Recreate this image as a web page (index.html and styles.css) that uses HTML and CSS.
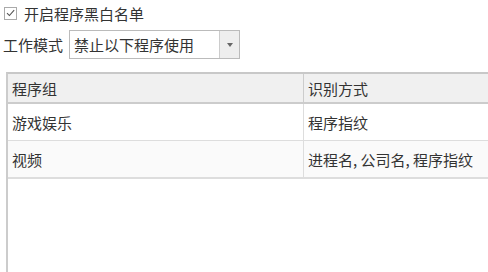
FILE: index.html
```html
<!DOCTYPE html>
<html>
<head>
<meta charset="utf-8" />
<title>黑白名单</title>
<link rel="stylesheet" href="styles.css">
</head>
<body>
<div class="panel">
	<label class="check">
		<span class="box">
			<svg width="12" height="12" viewBox="0 0 12 12"><path d="M2.2 6.2 L4.8 8.8 L10 2.8" fill="none" stroke="#555" stroke-width="1.2"/></svg>
		</span>
		开启程序黑白名单
	</label>

	<div class="mode">
		<span class="mode-label">工作模式</span>
		<div class="combo">
			<span class="combo-text">禁止以下程序使用</span>
			<span class="combo-btn"><span class="arrow"></span></span>
		</div>
	</div>

	<div class="grid">
		<div class="row head">
			<div class="cell c1">程序组</div>
			<div class="cell c2">识别方式</div>
		</div>
		<div class="row">
			<div class="cell c1">游戏娱乐</div>
			<div class="cell c2">程序指纹</div>
		</div>
		<div class="row alt">
			<div class="cell c1">视频</div>
			<div class="cell c2">进程名, 公司名, 程序指纹</div>
		</div>
	</div>
</div>
</body>
</html>
```

FILE: styles.css
```css
body {
	margin: 0;
	background: #fff;
	font-family: "Noto Sans CJK SC", "Noto Sans", sans-serif;
	font-size: 15px;
	color: #333;
}
.panel {
	height: 272px;
	overflow: hidden;
}
.check {
	display: flex;
	align-items: center;
	height: 16px;
	margin: 5px 0 0 4px;
	gap: 7px;
}
.box {
	width: 11px;
	height: 11px;
	border: 1px solid #aaa;
	display: flex;
	align-items: center;
	justify-content: center;
}
.mode {
	display: flex;
	align-items: center;
	margin: 9px 0 0 3px;
	gap: 6px;
}
.combo {
	display: flex;
	width: 169px;
	height: 27px;
	border: 1px solid #bbb;
}
.combo-text {
	flex: 1;
	padding-left: 4px;
	line-height: 27px;
}
.combo-btn {
	width: 19px;
	background: #eee;
	border-left: 1px solid #ccc;
	display: flex;
	align-items: center;
	justify-content: center;
}
.arrow {
	border-left: 3px solid transparent;
	border-right: 3px solid transparent;
	border-top: 4px solid #666;
}
.grid {
	margin: 13px 0 0 6px;
	width: 500px;
	height: 200px;
	border-left: 2px solid #ccc;
	border-top: 2px solid #c8c8c8;
}
.row {
	display: flex;
	height: 36px;
	border-bottom: 1px solid #ddd;
	background: #fff;
}
.row.head {
	height: 28px;
	background: #f0f0f0;
	border-bottom: 2px solid #ccc;
}
.row.alt {
	background: #fafafa;
	border-bottom: 2px solid #ddd;
}
.cell {
	display: flex;
	align-items: center;
	padding-left: 4px;
}
.c1 {
	width: 291px;
	border-right: 1px solid #ddd;
}
.head .c1 {
	border-right: 1px solid #ccc;
}
.c2 {
	flex: 1;
}
```
